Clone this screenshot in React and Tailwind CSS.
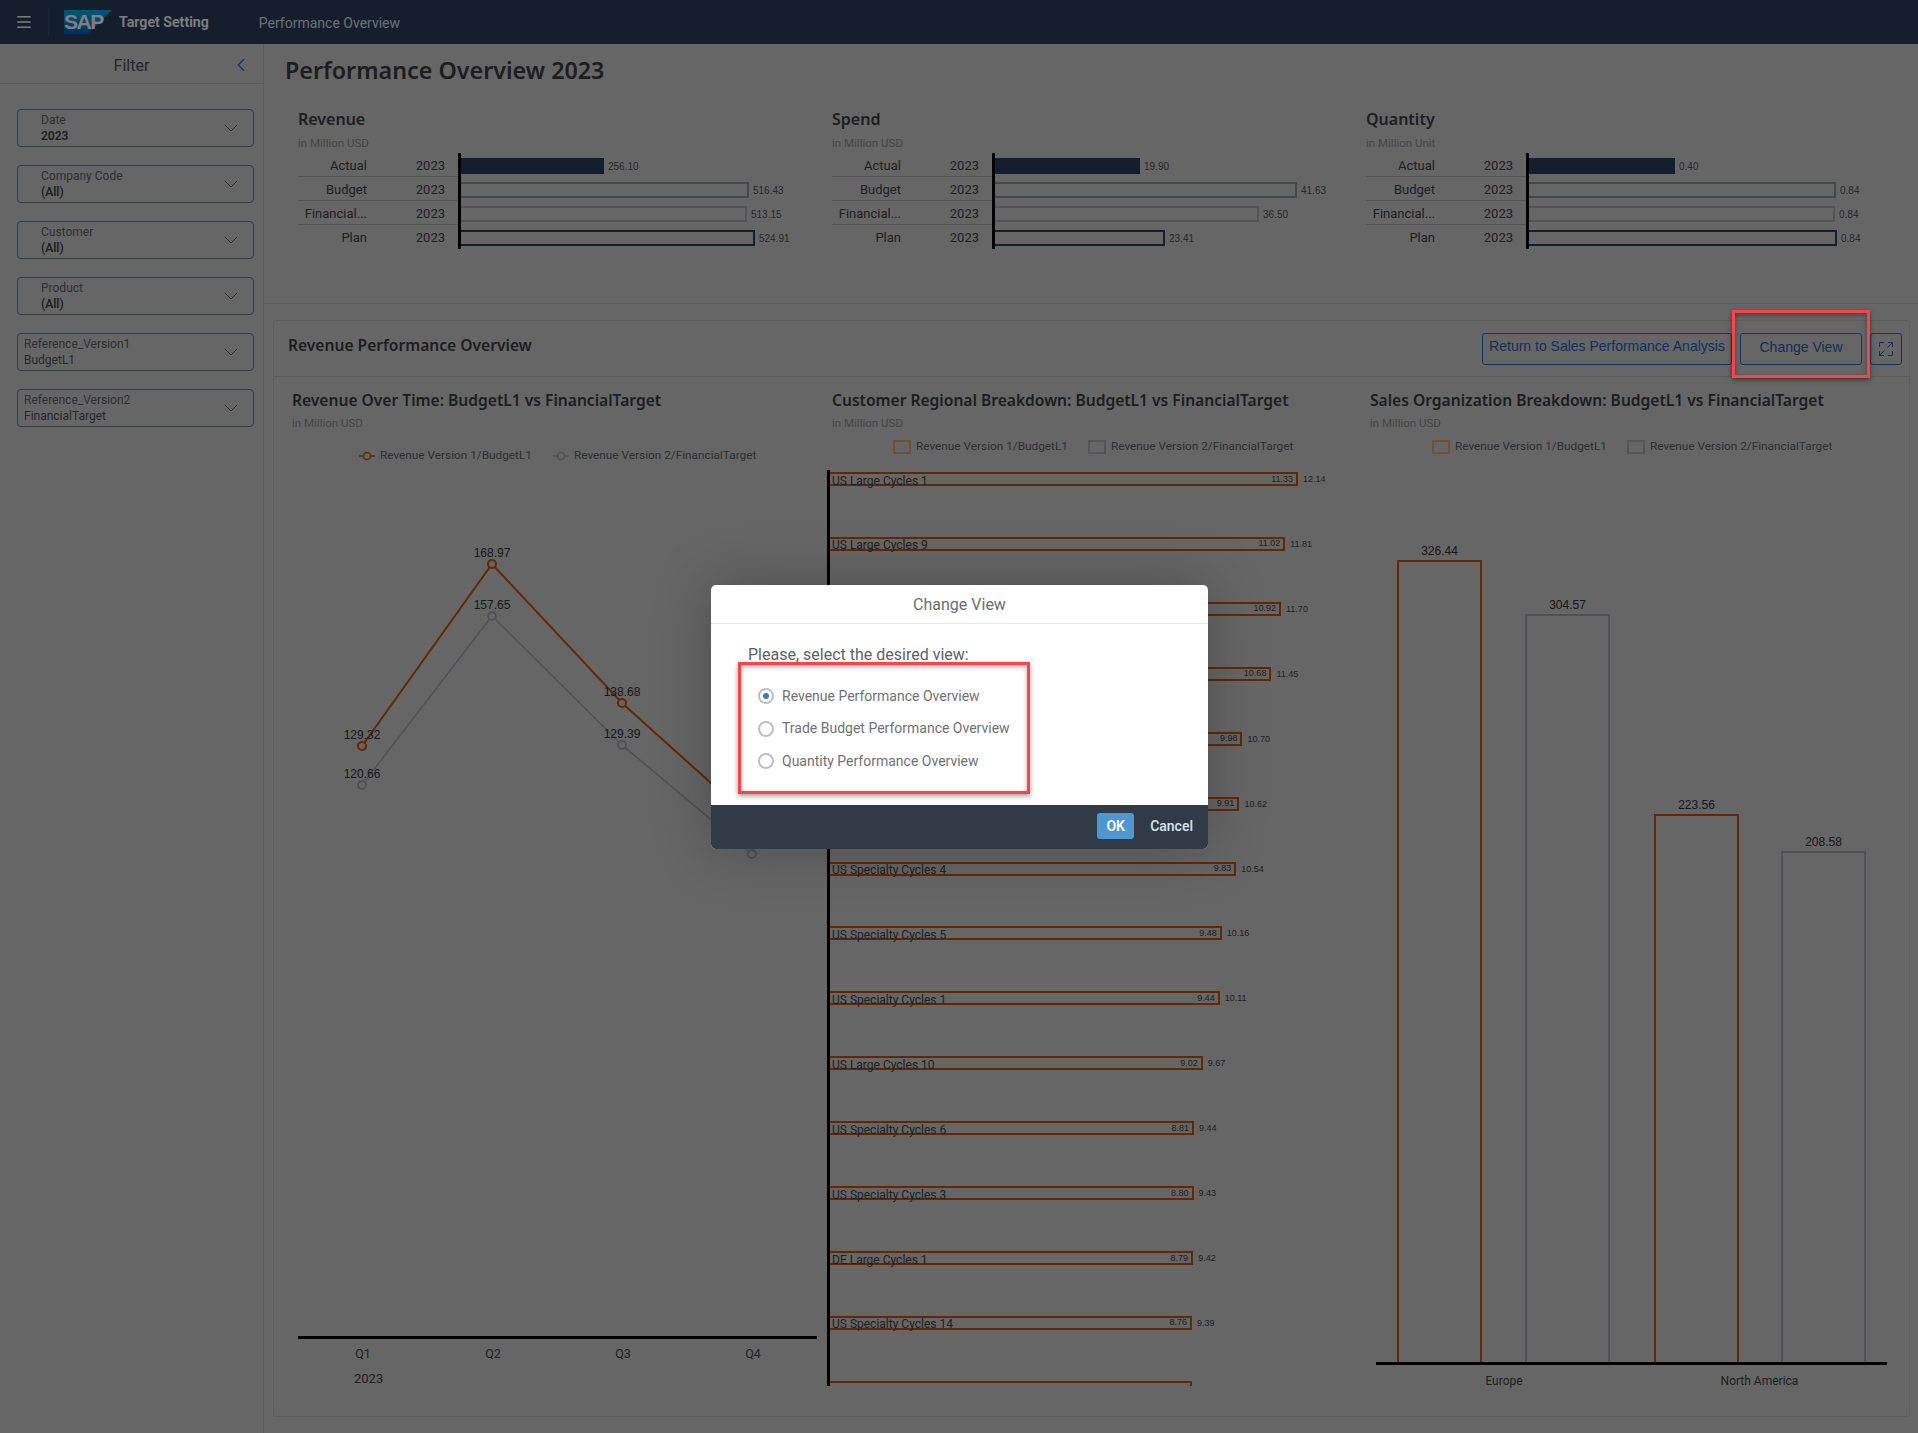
import React from 'react';
import { Menu, ChevronDown, ChevronLeft } from 'lucide-react';

const filters = [
  { label: 'Date', value: '2023', bold: true },
  { label: 'Company Code', value: '(All)', bold: true },
  { label: 'Customer', value: '(All)', bold: true },
  { label: 'Product', value: '(All)', bold: true },
  { label: 'Reference_Version1', value: 'BudgetL1' },
  { label: 'Reference_Version2', value: 'FinancialTarget' },
];

const kpis = [
  {
    title: 'Revenue',
    unit: 'in Million USD',
    rows: [
      { label: 'Actual', width: 143, value: '256.10', kind: 'actual' },
      { label: 'Budget', width: 288, value: '516.43', kind: 'budget' },
      { label: 'Financial...', width: 286, value: '513.15', kind: 'financial' },
      { label: 'Plan', width: 294, value: '524.91', kind: 'plan' },
    ],
  },
  {
    title: 'Spend',
    unit: 'in Million USD',
    rows: [
      { label: 'Actual', width: 145, value: '19.90', kind: 'actual' },
      { label: 'Budget', width: 302, value: '41.63', kind: 'budget' },
      { label: 'Financial...', width: 264, value: '36.50', kind: 'financial' },
      { label: 'Plan', width: 170, value: '23.41', kind: 'plan' },
    ],
  },
  {
    title: 'Quantity',
    unit: 'in Million Unit',
    rows: [
      { label: 'Actual', width: 146, value: '0.40', kind: 'actual' },
      { label: 'Budget', width: 307, value: '0.84', kind: 'budget' },
      { label: 'Financial...', width: 306, value: '0.84', kind: 'financial' },
      { label: 'Plan', width: 308, value: '0.84', kind: 'plan' },
    ],
  },
];

const barStyles = {
  actual: 'bg-[#283c58]',
  budget: 'border-2 border-l-0 border-[#8a8e9c]',
  financial: 'border-2 border-l-0 border-[#a6a6b2]',
  plan: 'border-2 border-l-0 border-[#283c58]',
};

const regions = [
  ['US Large Cycles 1', '11.33', 12.14],
  ['US Large Cycles 9', '11.02', 11.81],
  ['', '10.92', 11.7],
  ['', '10.68', 11.45],
  ['', '9.98', 10.7],
  ['', '9.91', 10.62],
  ['US Specialty Cycles 4', '9.83', 10.54],
  ['US Specialty Cycles 5', '9.48', 10.16],
  ['US Specialty Cycles 1', '9.44', 10.11],
  ['US Large Cycles 10', '9.02', 9.67],
  ['US Specialty Cycles 6', '8.81', 9.44],
  ['US Specialty Cycles 3', '8.80', 9.43],
  ['DE Large Cycles 1', '8.79', 9.42],
  ['US Specialty Cycles 14', '8.76', 9.39],
  ['', '', 9.39],
];

const salesOrgs = [
  { value: '326.44', height: 802, gap: '', tone: 'border-[#c85000]' },
  { value: '304.57', height: 748, gap: 'ml-[43px]', tone: 'border-[#a0a2aa]' },
  { value: '223.56', height: 548, gap: 'ml-[44px]', tone: 'border-[#c85000]' },
  { value: '208.58', height: 511, gap: 'ml-[42px]', tone: 'border-[#a0a2aa]' },
];

const orange = [[362, 745], [492, 563], [622, 702], [752, 819]];
const gray = [[362, 784], [492, 615], [622, 744], [752, 853]];
const lineLabels = [
  [362, 738, '129.32'],
  [362, 777, '120.66'],
  [492, 556, '168.97'],
  [492, 608, '157.65'],
  [622, 695, '138.68'],
  [622, 737, '129.39'],
];

function FilterBox({ label, value, bold }) {
  return (
    <div className={`flex h-[38px] w-[237px] items-center justify-between rounded-[4px] border border-[#6a7890] pr-[10px] ${bold ? 'pl-[23px]' : 'pl-[6px]'}`}>
      <div className="flex flex-col text-[12px] leading-[16px]">
        <span className="text-[#5c5e66]">{label}</span>
        <span className={bold ? 'font-semibold text-[#3e4046]' : 'text-[#4c4e56]'}>{value}</span>
      </div>
      <ChevronDown size={24} strokeWidth={1} className="text-[#4c5a70]" />
    </div>
  );
}

function Kpi({ title, unit, rows }) {
  return (
    <div className="w-[534px]">
      <h3 className="-mt-px font-['Noto_Sans'] text-[16px] leading-[20px] font-semibold text-[#3a3c42]">{title}</h3>
      <p className="mt-[6px] text-[11.5px] leading-[16px] text-[#8a8a8e]">{unit}</p>
      <div className="mt-[2px]">
        {rows.map((row, i) => (
          <div key={row.label} className="flex h-[24px] text-[#3e4046]">
            <div className={`flex w-[160px] items-center pt-[2px] text-[13px] ${i < 3 ? 'border-b border-[#a4a4a4]' : ''}`}>
              <span className="w-[69px] text-right">{row.label}</span>
              <span className="w-[78px] text-right">2023</span>
            </div>
            <div className="flex items-center border-l-[3px] border-black pt-[2px]">
              <div className={`h-[16px] ${barStyles[row.kind]}`} style={{ width: row.width }} />
              <span className="ml-[4px] font-['Liberation_Sans'] text-[10px] text-[#4c4e56]">{row.value}</span>
            </div>
          </div>
        ))}
      </div>
    </div>
  );
}

function Legend({ className, line }) {
  const swatch = (tone) =>
    line ? (
      <svg width="16" height="10" viewBox="0 0 16 10" className={tone === 'a' ? 'text-[#c85000]' : 'text-[#a0a2aa]'}>
        <path d="M0 5h4M12 5h4" stroke="currentColor" strokeWidth="1.5" />
        <circle cx="8" cy="5" r="3.5" fill="none" stroke="currentColor" strokeWidth="1.5" />
      </svg>
    ) : (
      <span className={`h-[14px] w-[18px] border-2 ${tone === 'a' ? 'border-[#e0a070]' : 'border-[#a8a8b4]'}`} />
    );
  return (
    <div className={`flex h-[16px] items-center text-[11.8px] text-[#5c5e66] ${className}`}>
      {swatch('a')}
      <span className={line ? 'ml-[5px] w-[173px]' : 'ml-[5px] w-[172px]'}>Revenue Version 1/BudgetL1</span>
      {swatch('b')}
      <span className="ml-[5px]">Revenue Version 2/FinancialTarget</span>
    </div>
  );
}

function ChartHead({ title }) {
  return (
    <>
      <h4 className="font-['Noto_Sans'] text-[15.6px] leading-[22px] font-semibold whitespace-nowrap text-[#3a3c42]">{title}</h4>
      <p className="mt-[4px] text-[11.5px] leading-[16px] text-[#8a8a8e]">in Million USD</p>
    </>
  );
}

function LineChart() {
  const points = (list) => list.map((p) => p.join(',')).join(' ');
  return (
    <svg width="530" height="925" viewBox="292 463 530 925" className="block">
      <polyline points={points(gray)} fill="none" stroke="#a0a2aa" strokeWidth="1.5" />
      <polyline points={points(orange)} fill="none" stroke="#c85000" strokeWidth="2" />
      {gray.map(([x, y]) => (
        <circle key={x} cx={x} cy={y} r="4" fill="#cccccc" stroke="#a0a2aa" strokeWidth="2" />
      ))}
      {orange.map(([x, y]) => (
        <circle key={x} cx={x} cy={y} r="4" fill="#cccccc" stroke="#c85000" strokeWidth="2" />
      ))}
      {lineLabels.map(([x, y, text]) => (
        <text key={text} x={x} y={y} textAnchor="middle" fontSize="12" fontFamily="Liberation Sans" fill="#2e2e34">
          {text}
        </text>
      ))}
      <rect x="298" y="1335" width="519" height="3" fill="#000" />
      {['Q1', 'Q2', 'Q3', 'Q4'].map((q, i) => (
        <text key={q} x={363 + i * 130} y="1357" textAnchor="middle" fontSize="12.5" fontFamily="Roboto" fill="#3e4046">
          {q}
        </text>
      ))}
      <text x="354" y="1382" fontSize="13" fontFamily="Roboto" fill="#3e4046">2023</text>
    </svg>
  );
}

function RegionChart() {
  return (
    <div className="-ml-[5px] h-[916px] overflow-hidden border-l-[3px] border-black">
      {regions.map(([name, inner, outer], i) => (
        <div key={i} className="flex h-[64.93px] items-start pt-[2px]">
          <div
            className="flex h-[14px] items-center justify-between border-2 border-l-0 border-[#c85000] pr-[3px] whitespace-nowrap"
            style={{ width: outer * 38.55 }}
          >
            <span className="pt-[3px] pl-[2px] text-[12px] leading-none text-[#3e4046]">{name}</span>
            <span className="font-['Liberation_Sans'] text-[9px] leading-none text-[#3e4046]">{inner}</span>
          </div>
          {inner && <span className="ml-[5px] font-['Liberation_Sans'] text-[9px] leading-[14px] text-[#3e4046]">{outer.toFixed(2)}</span>}
        </div>
      ))}
    </div>
  );
}

function SalesChart() {
  return (
    <>
      <div className="ml-[6px] box-content flex h-[907px] w-[490px] items-end border-b-[3px] border-black pl-[21px]">
        {salesOrgs.map((org) => (
          <div key={org.value} className={`flex w-[85px] shrink-0 flex-col items-center ${org.gap}`}>
            <span className="mb-[2px] font-['Liberation_Sans'] text-[12px] leading-[14px] text-[#2e2e34]">{org.value}</span>
            <div className={`w-full border-2 border-b-0 ${org.tone}`} style={{ height: org.height }} />
          </div>
        ))}
      </div>
      <div className="mt-[7px] ml-[6px] flex w-[511px] text-[12px] text-[#3e4046]">
        <span className="w-[256px] text-center">Europe</span>
        <span className="w-[255px] text-center">North America</span>
      </div>
    </>
  );
}

function ChangeViewDialog() {
  const views = ['Revenue Performance Overview', 'Trade Budget Performance Overview', 'Quantity Performance Overview'];
  return (
    <div className="absolute top-[585px] left-[711px] flex h-[264px] w-[497px] flex-col overflow-hidden rounded-[5px] bg-white shadow-[0_0_60px_rgba(0,0,0,0.25)]">
      <div className="flex h-[39px] items-center justify-center border-b border-[#e5e5e5] pt-[2px] text-[16px] text-[#6a6d70]">Change View</div>
      <div className="flex-1 pt-[21px] pl-[37px]">
        <p className="text-[16px] leading-[20px] text-[#5e6165]">Please, select the desired view:</p>
        <div className="mt-[23px] ml-[10px] flex flex-col gap-[16.5px]">
          {views.map((view, i) => (
            <div key={view} className="flex h-[16px] items-center text-[14px] text-[#6f7275]">
              <span className="flex h-[16px] w-[16px] items-center justify-center rounded-full border-2 border-[#bfbfbf]">
                {i === 0 && <span className="h-[6px] w-[6px] rounded-full bg-[#3a7ab5]" />}
              </span>
              <span className="ml-[8px]">{view}</span>
            </div>
          ))}
        </div>
      </div>
      <div className="flex h-[44px] items-center justify-end bg-[#303b47] pr-[15px] pb-[2px]">
        <button className="h-[26px] w-[37px] rounded-[3px] bg-[#5096d3] text-[14px] font-semibold text-white">OK</button>
        <button className="ml-[16px] text-[14px] font-medium text-[#d6e4f0]">Cancel</button>
      </div>
    </div>
  );
}

export default function App() {
  return (
    <div className="relative h-[1433px] w-[1918px] overflow-hidden bg-[#cccccc] font-['Roboto',sans-serif]">
      <header className="flex h-[44px] items-center bg-[#283c58]">
        <Menu size={18} strokeWidth={2.25} className="ml-[15px] text-white" />
        <div className="ml-[15px] h-[28px] w-px bg-[#3a4c68]" />
        <svg width="48" height="24" viewBox="0 0 48 24" className="ml-[15px]">
          <defs>
            <linearGradient id="sapLogo" x1="0" y1="0" x2="0" y2="1">
              <stop offset="0" stopColor="#00aeef" />
              <stop offset="1" stopColor="#0a5cb8" />
            </linearGradient>
          </defs>
          <polygon points="0,0 48,0 24,24 0,24" fill="url(#sapLogo)" />
          <text x="0" y="19" fontSize="21" fontWeight="700" fontFamily="Liberation Sans" fill="#ffffff" letterSpacing="-1.5">SAP</text>
        </svg>
        <span className="ml-[7px] pt-[2px] text-[14.2px] font-semibold text-white">Target Setting</span>
        <span className="ml-[50px] pt-[2px] text-[14px] text-[#d6e0ea]">Performance Overview</span>
      </header>

      <div className="flex h-[1389px]">
        <aside className="w-[264px] shrink-0 border-r border-[#b8b8b8]">
          <div className="relative flex h-[40px] items-center justify-center border-b border-[#b8b8b8] pt-[5px] text-[16px] text-[#4c4e56]">
            Filter
            <ChevronLeft size={22} strokeWidth={1.5} className="absolute top-[10px] left-[230px] text-[#1e74cc]" />
          </div>
          <div className="flex flex-col gap-[18px] pt-[25px] pl-[17px]">
            {filters.map((f) => (
              <FilterBox key={f.label} {...f} />
            ))}
          </div>
        </aside>

        <main className="flex-1">
          <h1 className="pt-[10px] pb-px pl-[21px] font-['Noto_Sans'] text-[23.3px] leading-[32px] font-semibold text-[#3a3c42]">Performance Overview 2023</h1>
          <section className="mt-[23px] flex h-[194px] border-b border-[#b8b8b8] pl-[34px]">
            {kpis.map((k) => (
              <Kpi key={k.title} {...k} />
            ))}
          </section>

          <section className="mt-[16px] ml-[9px] h-[1097px] w-[1637px] rounded-[3px] border border-[#bcbcbc]">
            <div className="flex h-[56px] items-center justify-between border-b border-[#b8b8b8] pr-[7px] pl-[14px]">
              <h2 className="pb-[5px] font-['Noto_Sans'] text-[15.6px] font-semibold text-[#3a3c42]">Revenue Performance Overview</h2>
              <div className="flex items-center gap-[8px] font-['Liberation_Sans'] text-[14px] text-[#1e62b8]">
                <button className="h-[32px] w-[250px] rounded-[3px] border border-[#2468be] pb-[5px]">Return to Sales Performance Analysis</button>
                <button className="h-[32px] w-[122px] rounded-[3px] border border-[#2468be] pb-[2px]">Change View</button>
                <button className="flex h-[32px] w-[32px] items-center justify-center rounded-[3px] border border-[#2468be]">
                  <svg width="16" height="16" viewBox="0 0 16 16" fill="none" stroke="currentColor" strokeWidth="1">
                    <path d="M1.5 6V1.5H6M10 1.5h4.5V6M14.5 1.5 9.5 6.5M1.5 10v4.5H6M1.5 14.5l5-5M14.5 10v4.5H10" />
                  </svg>
                </button>
              </div>
            </div>

            <div className="grid grid-cols-[540px_538px_1fr] pt-[12px] pl-[18px]">
              <div>
                <ChartHead title="Revenue Over Time: BudgetL1 vs FinancialTarget" />
                <Legend line className="mt-[17px] ml-[67px]" />
                <LineChart />
              </div>
              <div>
                <ChartHead title="Customer Regional Breakdown: BudgetL1 vs FinancialTarget" />
                <Legend className="mt-[8px] ml-[61px]" />
                <div className="h-[15px]" />
                <RegionChart />
              </div>
              <div>
                <ChartHead title="Sales Organization Breakdown: BudgetL1 vs FinancialTarget" />
                <Legend className="mt-[8px] ml-[62px]" />
                <SalesChart />
              </div>
            </div>
          </section>
        </main>
      </div>

      <div className="absolute inset-0 bg-black/50" />

      <div className="absolute top-[310px] left-[1732px] h-[68px] w-[138px] border-[3px] border-[#fb4348] shadow-[0_2px_5px_rgba(0,0,0,0.45),inset_0_2px_5px_rgba(0,0,0,0.35)]" />

      <ChangeViewDialog />

      <div className="absolute top-[662px] left-[738px] h-[132px] w-[292px] border-[3px] border-[#fb4348] shadow-[0_2px_5px_rgba(0,0,0,0.4),inset_0_2px_5px_rgba(0,0,0,0.3)]" />
    </div>
  );
}
